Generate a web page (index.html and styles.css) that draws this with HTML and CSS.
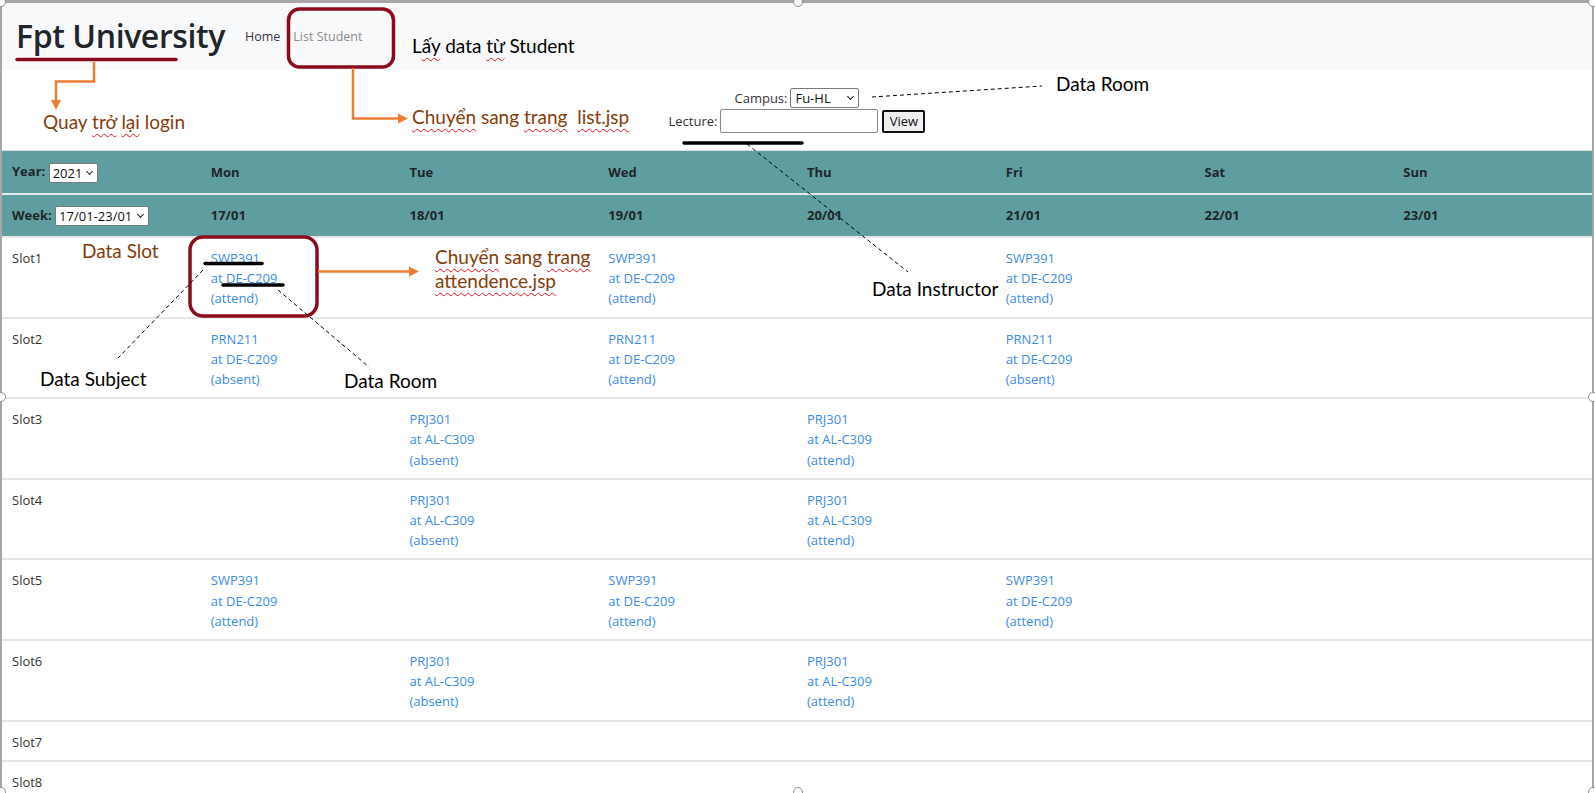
FILE: index.html
```html
<!DOCTYPE html>
<html lang="vi">
<head>
<meta charset="utf-8">
<title>Timetable</title>
<link rel="stylesheet" href="styles.css">
</head>
<body>
<div class="frame">
  <nav class="navbar">
    <span class="brand">Fpt University</span>
    <a class="nav-link home">Home</a>
    <a class="nav-link muted">List Student</a>
  </nav>

  <form class="filters">
    <div class="filter-row">
      <label>Campus:</label>
      <span class="select sel-campus"><select><option>Fu-HL</option></select></span>
    </div>
    <div class="filter-row">
      <label>Lecture:</label>
      <input class="lecture" type="text">
      <button class="view" type="button">View</button>
    </div>
  </form>

  <table class="timetable">
    <thead>
      <tr>
        <th>Year: <span class="select sel-year"><select><option>2021</option></select></span></th>
        <th>Mon</th><th>Tue</th><th>Wed</th><th>Thu</th><th>Fri</th><th>Sat</th><th>Sun</th>
      </tr>
      <tr class="week">
        <th>Week: <span class="select sel-week"><select><option>17/01-23/01</option></select></span></th>
        <th>17/01</th><th>18/01</th><th>19/01</th><th>20/01</th><th>21/01</th><th>22/01</th><th>23/01</th>
      </tr>
    </thead>
    <tbody>
      <tr>
        <td>Slot1</td>
        <td class="lesson"><a class="u">SWP391</a><br>at <a class="u">DE-C209</a><br><a>(attend)</a></td>
        <td></td>
        <td class="lesson"><a>SWP391</a><br>at DE-C209<br><a>(attend)</a></td>
        <td></td>
        <td class="lesson"><a>SWP391</a><br>at DE-C209<br><a>(attend)</a></td>
        <td></td><td></td>
      </tr>
      <tr>
        <td>Slot2</td>
        <td class="lesson"><a>PRN211</a><br>at DE-C209<br><a>(absent)</a></td>
        <td></td>
        <td class="lesson"><a>PRN211</a><br>at DE-C209<br><a>(attend)</a></td>
        <td></td>
        <td class="lesson"><a>PRN211</a><br>at DE-C209<br><a>(absent)</a></td>
        <td></td><td></td>
      </tr>
      <tr>
        <td>Slot3</td>
        <td></td>
        <td class="lesson"><a>PRJ301</a><br>at AL-C309<br><a>(absent)</a></td>
        <td></td>
        <td class="lesson"><a>PRJ301</a><br>at AL-C309<br><a>(attend)</a></td>
        <td></td><td></td><td></td>
      </tr>
      <tr>
        <td>Slot4</td>
        <td></td>
        <td class="lesson"><a>PRJ301</a><br>at AL-C309<br><a>(absent)</a></td>
        <td></td>
        <td class="lesson"><a>PRJ301</a><br>at AL-C309<br><a>(attend)</a></td>
        <td></td><td></td><td></td>
      </tr>
      <tr>
        <td>Slot5</td>
        <td class="lesson"><a>SWP391</a><br>at DE-C209<br><a>(attend)</a></td>
        <td></td>
        <td class="lesson"><a>SWP391</a><br>at DE-C209<br><a>(attend)</a></td>
        <td></td>
        <td class="lesson"><a>SWP391</a><br>at DE-C209<br><a>(attend)</a></td>
        <td></td><td></td>
      </tr>
      <tr>
        <td>Slot6</td>
        <td></td>
        <td class="lesson"><a>PRJ301</a><br>at AL-C309<br><a>(absent)</a></td>
        <td></td>
        <td class="lesson"><a>PRJ301</a><br>at AL-C309<br><a>(attend)</a></td>
        <td></td><td></td><td></td>
      </tr>
      <tr><td>Slot7</td><td></td><td></td><td></td><td></td><td></td><td></td><td></td></tr>
      <tr><td>Slot8</td><td></td><td></td><td></td><td></td><td></td><td></td><td></td></tr>
    </tbody>
  </table>
</div>

<div class="overlay">
  <svg class="marks" width="1595" height="793" viewBox="0 0 1595 793">
    <g fill="none" stroke-linecap="round" stroke-linejoin="miter">
      <path d="M17 59.5 H176" stroke="#8a0b1c" stroke-width="3.5"/>
      <rect x="288.5" y="9" width="105" height="58" rx="11" stroke="#8a0b1c" stroke-width="3.5"/>
      <rect x="190" y="237" width="127" height="79" rx="13" stroke="#8a0b1c" stroke-width="3.5"/>
      <path d="M94 62 V81.5 H56 V101" stroke="#ed7d31" stroke-width="2.5" stroke-linecap="butt"/>
      <path d="M353 68 V118.5 H399" stroke="#ed7d31" stroke-width="2.5" stroke-linecap="butt"/>
      <path d="M318 271.5 H410" stroke="#ed7d31" stroke-width="2.5" stroke-linecap="butt"/>
      <path d="M684 143 H802" stroke="#000" stroke-width="3.5"/>
      <path d="M205 263.5 H262" stroke="#000" stroke-width="3.5"/>
      <path d="M223 285 H283" stroke="#000" stroke-width="3.5"/>
      <g stroke="#000" stroke-width="1" stroke-dasharray="4 3" stroke-linecap="butt">
        <path d="M872 97 L1042 86"/>
        <path d="M747 144 L908 272"/>
        <path d="M203 270 L118 358"/>
        <path d="M278 290 L369 367"/>
      </g>
    </g>
    <g fill="#ed7d31">
      <polygon points="51,100 61,100 56,110"/>
      <polygon points="398,113.5 398,123.5 408,118.5"/>
      <polygon points="409,266.5 409,276.5 419,271.5"/>
    </g>
  </svg>

  <div class="note n-lay">L<span class="sp">ấy</span> data <span class="sp">từ</span> Student</div>
  <div class="note brown n-quay">Quay <span class="sp">trở</span> <span class="sp">lại</span> login</div>
  <div class="note brown n-list"><span class="sp">Chuyển</span> sang <span class="sp">trang</span>&nbsp; <span class="sp">list.jsp</span></div>
  <div class="note n-room1">Data Room</div>
  <div class="note n-instr">Data Instructor</div>
  <div class="note brown n-slot">Data Slot</div>
  <div class="note brown n-att"><span class="sp">Chuyển</span> sang <span class="sp">trang</span><br><span class="sp">attendence.jsp</span></div>
  <div class="note n-subj">Data Subject</div>
  <div class="note n-room2">Data Room</div>

  <span class="handle h-tl"></span>
  <span class="handle h-tm"></span>
  <span class="handle h-tr"></span>
  <span class="handle h-ml"></span>
  <span class="handle h-mr"></span>
  <span class="handle h-bl"></span>
  <span class="handle h-bm"></span>
  <span class="handle h-br"></span>
</div>
</body>
</html>
```

FILE: styles.css
```css
html, body {
  margin: 0;
  height: 793px;
  overflow: hidden;
  background: #fff;
}

body {
  position: relative;
}

.frame {
  box-sizing: border-box;
  width: 1594px;
  height: 793px;
  border-top: 3px solid #a6a6a6;
  border-left: 2px solid #a6a6a6;
  border-right: 2px solid #a6a6a6;
  font-family: "Open Sans", "Noto Sans", sans-serif;
  font-size: 13px;
  color: #333;
  overflow: hidden;
}

/* ---------- navbar ---------- */
.navbar {
  display: flex;
  align-items: center;
  height: 67px;
  padding-left: 14px;
  background: #f8f9fa;
}

.brand {
  font-size: 32px;
  font-weight: 600;
  line-height: 1;
  letter-spacing: -0.4px;
  color: #212529;
  margin-right: 20px;
  padding-bottom: 2px;
}

.nav-link {
  font-size: 12.5px;
  margin-right: 13px;
  cursor: pointer;
}

.nav-link.home { color: #3b3446; }
.nav-link.muted { color: #8c8c8c; }

/* ---------- custom selects ---------- */
.select {
  position: relative;
  display: inline-block;
  vertical-align: middle;
  line-height: 0;
}

.select select {
  appearance: none;
  -webkit-appearance: none;
  box-sizing: border-box;
  width: 100%;
  height: 20px;
  margin: 0;
  padding: 0 14px 0 3px;
  border: 1px solid #7a7a7a;
  border-radius: 2px;
  background: #fff;
  font-family: "Open Sans", sans-serif;
  font-size: 13px;
  font-weight: 400;
  line-height: 18px;
  color: #111;
}

.select::after {
  content: "";
  position: absolute;
  right: 6px;
  top: 6px;
  width: 4px;
  height: 4px;
  border-right: 1.6px solid #222;
  border-bottom: 1.6px solid #222;
  transform: rotate(45deg);
  pointer-events: none;
}

.sel-campus { width: 69px; }
.sel-campus select { padding-left: 4px; }
.sel-year { width: 49px; }
.sel-week { width: 94px; }

/* ---------- filters ---------- */
.filters {
  display: flex;
  flex-direction: column;
  align-items: center;
  gap: 1px;
  padding: 18px 0 17px;
  margin: 0;
}

.filter-row {
  display: flex;
  align-items: center;
  gap: 3px;
  color: #333;
  font-size: 13px;
}

.lecture {
  box-sizing: border-box;
  width: 158px;
  height: 24px;
  border: 1px solid #8a8a8a;
  border-radius: 2px;
  margin-right: 1px;
}

.view {
  box-sizing: border-box;
  width: 43px;
  height: 23px;
  border: 2px solid #111;
  border-radius: 2px;
  background: #efefef;
  font-family: "Open Sans", sans-serif;
  font-size: 13px;
  color: #111;
  padding: 0;
}

/* ---------- table ---------- */
.timetable {
  width: 1590px;
  table-layout: fixed;
  border-collapse: collapse;
  border-top: 1px solid #dcdcdc;
}

.timetable th {
  background: #5f9ea0;
  color: #212529;
  font-weight: 700;
  font-size: 13px;
  text-align: left;
  padding: 10px 10px;
  line-height: 20px;
  white-space: nowrap;
}

.timetable tr.week th {
  border-top: 2px solid #e3eaea;
}

.timetable td {
  border-top: 2px solid #e6e6e6;
  padding: 10px 10px 8px;
  line-height: 20.2px;
  vertical-align: top;
  color: #333;
  font-size: 13px;
}

.timetable td.lesson {
  color: #3a8ce8;
}

.lesson a {
  color: #3a8ce8;
  text-decoration: none;
}

.lesson a.u {
  text-decoration: underline;
}

/* ---------- annotation overlay ---------- */
.overlay {
  position: absolute;
  left: 0;
  top: 0;
  width: 1595px;
  height: 793px;
  pointer-events: none;
}

.marks {
  position: absolute;
  left: 0;
  top: 0;
}

.note {
  position: absolute;
  font-family: Lato, "Liberation Sans", sans-serif;
  font-size: 19px;
  line-height: 24px;
  white-space: nowrap;
  color: #000;
}

.note.brown { color: #843c0c; }

.sp {
  text-decoration: underline wavy #e0141e;
  text-decoration-thickness: 1px;
  text-underline-offset: 4px;
  text-decoration-skip-ink: none;
}

.n-lay   { left: 412px; top: 34px; }
.n-quay  { left: 43px;  top: 110px; }
.n-list  { left: 412px; top: 105px; }
.n-room1 { left: 1056px; top: 72px; }
.n-instr { left: 872px; top: 277px; }
.n-slot  { left: 82px;  top: 239px; }
.n-att   { left: 435px; top: 245px; }
.n-subj  { left: 40px;  top: 367px; }
.n-room2 { left: 344px; top: 369px; }

.handle {
  position: absolute;
  box-sizing: border-box;
  width: 10px;
  height: 10px;
  margin: -5px 0 0 -5px;
  border: 1.5px solid #8e8e8e;
  border-radius: 50%;
  background: #fff;
}

.h-tl { left: 1px;    top: 2px; }
.h-tm { left: 798px;  top: 2px; }
.h-tr { left: 1593px; top: 2px; }
.h-ml { left: 1px;    top: 397px; }
.h-mr { left: 1593px; top: 397px; }
.h-bl { left: 1px;    top: 792px; }
.h-bm { left: 798px;  top: 792px; }
.h-br { left: 1593px; top: 792px; }
```
